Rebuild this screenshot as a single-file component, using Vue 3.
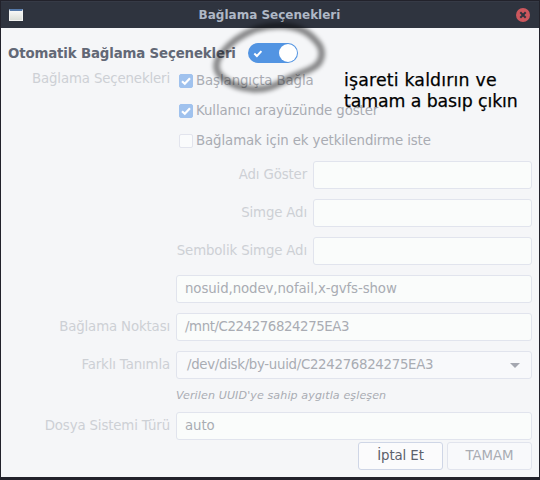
<script setup>
import { ref } from 'vue'

const options = ref([
  { text: 'Başlangıçta Bağla', checked: true },
  { text: 'Kullanıcı arayüzünde göster', checked: true },
  { text: 'Bağlamak için ek yetkilendirme iste', checked: false }
])
const names = ref([
  { label: 'Adı Göster', value: '' },
  { label: 'Simge Adı', value: '' },
  { label: 'Sembolik Simge Adı', value: '' }
])
</script>

<template>
  <div class="window">
    <header class="titlebar">
      <span class="app-icon"></span>
      <h1 class="title">Bağlama Seçenekleri</h1>
      <svg class="close" width="14" height="14" viewBox="0 0 14 14">
        <circle cx="7" cy="7" r="7" fill="#cc575d" />
        <path d="M4.3 4.3 L9.7 9.7 M9.7 4.3 L4.3 9.7" stroke="#2f343f" stroke-width="2" />
      </svg>
    </header>

    <main class="body">
      <div class="auto">
        <span class="auto-label">Otomatik Bağlama Seçenekleri</span>
        <span class="switch">
          <svg width="10" height="9" viewBox="0 0 10 9">
            <path d="M1.3 4.6 L3.9 7 L8.4 2.1" fill="none" stroke="#fff" stroke-width="2" />
          </svg>
          <span class="knob"></span>
        </span>
      </div>

      <div class="row options-row">
        <span class="label">Bağlama Seçenekleri</span>
        <div class="options">
          <div v-for="o in options" :key="o.text" class="option">
            <span class="box" :class="{ on: o.checked }">
              <svg v-if="o.checked" width="12" height="12" viewBox="0 0 12 12">
                <path d="M2 6.2 L4.8 8.8 L10 3.2" fill="none" stroke="#fff" stroke-width="2.2" />
              </svg>
            </span>
            <span class="option-text">{{ o.text }}</span>
          </div>
        </div>
      </div>

      <div v-for="n in names" :key="n.label" class="row name-row">
        <span class="label">{{ n.label }}</span>
        <div class="field">{{ n.value }}</div>
      </div>
      <div class="row">
        <span class="label"></span>
        <div class="field">nosuid,nodev,nofail,x-gvfs-show</div>
      </div>
      <div class="row">
        <span class="label">Bağlama Noktası</span>
        <div class="field mount">/mnt/C224276824275EA3</div>
      </div>
      <div class="row combo-row">
        <span class="label">Farklı Tanımla</span>
        <div class="field combo">
          <span>/dev/disk/by-uuid/C224276824275EA3</span>
          <svg width="10" height="5" viewBox="0 0 10 5"><path d="M0 0 H10 L5 5 Z" fill="#a4a7b0" /></svg>
        </div>
      </div>
      <p class="hint">Verilen UUID'ye sahip aygıtla eşleşen</p>
      <div class="row fs-row">
        <span class="label">Dosya Sistemi Türü</span>
        <div class="field">auto</div>
      </div>

      <footer class="actions">
        <div class="button">İptal Et</div>
        <div class="button disabled">TAMAM</div>
      </footer>
    </main>

    <svg class="scribble" width="130" height="90" viewBox="205 15 130 90">
      <path
        d="M253 89 C240 88 231 85 223 78 C213 70 216 60 222 53 C230 43 243 34 256 29 C274 24 297 24 310 35 C319 43 325 50 320 61 C316 69 303 72 292 77 C279 83 269 91 251 89"
      />
    </svg>
    <div class="note">
      <div class="note-first">işareti kaldırın ve</div>
      <div class="note-second">tamam a basıp çıkın</div>
    </div>
  </div>
</template>

<style>
body {
  margin: 0;
  background: #1f2028;
}
</style>

<style scoped>
.window {
  position: relative;
  box-sizing: border-box;
  width: 540px;
  height: 480px;
  overflow: hidden;
  display: flex;
  flex-direction: column;
  border: solid #22222b;
  border-width: 1px 1px 3px;
  background: #f5f6f8;
  font: 13.33px 'DejaVu Sans', sans-serif;
  letter-spacing: -0.1px;
  white-space: nowrap;
}
.titlebar {
  box-sizing: border-box;
  height: 27px;
  flex: none;
  display: grid;
  grid-template-columns: 14px 1fr 14px;
  align-items: center;
  padding: 0 9px 0 8px;
  border-top: 1px solid #363a46;
  background: #2f343f;
}
.app-icon {
  box-sizing: border-box;
  width: 14px;
  height: 12px;
  border: 1px solid #f2f3f1;
  border-top: 2px solid #5579a9;
  background: linear-gradient(#f8f8f7, #dcdfd9);
}
.title {
  margin: 0;
  text-align: center;
  font-size: 12px;
  font-weight: bold;
  letter-spacing: 0;
  color: #afb8c6;
}
.body {
  flex: 1;
  padding: 15px 7px 0;
}
.auto {
  height: 20px;
  display: flex;
  align-items: center;
  margin-bottom: 3px;
}
.auto-label {
  width: 240px;
  font-weight: bold;
  letter-spacing: -0.14px;
  color: #626876;
}
.switch {
  box-sizing: border-box;
  width: 50px;
  height: 20px;
  padding: 0 1px 0 5px;
  display: flex;
  align-items: center;
  justify-content: space-between;
  border-radius: 10px;
  background: #5294e2;
}
.knob {
  width: 18px;
  height: 18px;
  border-radius: 50%;
  background: #fff;
}
.row {
  display: grid;
  grid-template-columns: 162px 1fr;
  column-gap: 6px;
  align-items: center;
  margin-bottom: 10px;
}
.label {
  text-align: right;
  line-height: 26px;
  letter-spacing: -0.14px;
  color: #cdd0d5;
}
.options-row {
  align-items: start;
  margin-bottom: 5px;
}
.option {
  height: 30px;
  padding-left: 3px;
  display: flex;
  align-items: center;
  gap: 3px;
  color: #a9acb3;
}
.option-text {
  line-height: 26px;
}
.box {
  box-sizing: border-box;
  width: 14px;
  height: 14px;
  display: flex;
  align-items: center;
  justify-content: center;
  border: 1px solid #e2e4ed;
  border-radius: 2px;
  background: #fafbfc;
}
.box.on {
  border-color: #a0c2ee;
  background: #a0c2ee;
}
.name-row {
  grid-template-columns: 299px 1fr;
}
.field {
  box-sizing: border-box;
  height: 28px;
  padding: 0 8px;
  line-height: 26px;
  border: 1px solid #e1e4ed;
  border-radius: 3px;
  background: #fafcfb;
  color: #a9acb3;
}
.mount {
  letter-spacing: -0.41px;
}
.combo-row {
  margin-bottom: 0;
}
.combo {
  display: flex;
  align-items: center;
  justify-content: space-between;
  padding: 0 11px 0 10px;
  background: #f8f9fb;
  letter-spacing: -0.3px;
}
.hint {
  margin: 0 0 0 168px;
  height: 33px;
  line-height: 33px;
  font-size: 11.1px;
  letter-spacing: 0.1px;
  font-style: italic;
  color: #a9acb3;
}
.fs-row {
  margin-bottom: 2px;
}
.actions {
  display: flex;
  justify-content: flex-end;
  gap: 4px;
}
.button {
  box-sizing: border-box;
  width: 85px;
  height: 28px;
  line-height: 26px;
  text-align: center;
  border: 1px solid #cfd6e6;
  border-radius: 3px;
  background: #fbfbfc;
  color: #5c616c;
}
.button.disabled {
  border-color: #e1e4ed;
  background: #f8f9fb;
  color: #a9acb3;
}
.scribble {
  position: absolute;
  left: 204px;
  top: 14px;
  filter: blur(2px);
}
.scribble path {
  fill: none;
  stroke: #000;
  stroke-opacity: 0.46;
  stroke-width: 6.5;
}
.note {
  position: absolute;
  left: 343px;
  top: 69px;
  font-size: 17.33px;
  line-height: 21px;
  color: #000;
  -webkit-text-stroke: 0.25px #000;
}
.note-first {
  letter-spacing: 0.18px;
}
.note-second {
  letter-spacing: -0.1px;
}
</style>
